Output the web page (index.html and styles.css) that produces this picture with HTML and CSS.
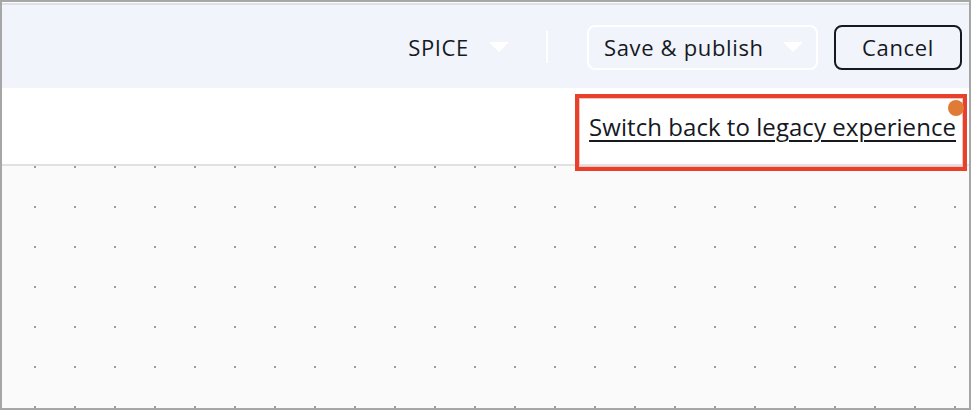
FILE: index.html
```html
<!DOCTYPE html>
<html lang="en">
<head>
<meta charset="utf-8">
<title>Editor</title>
<link rel="stylesheet" href="styles.css">
</head>
<body>
<div class="frame">
  <header class="topbar">
    <div class="source">
      <span class="source-label">SPICE</span>
      <svg class="caret" width="20" height="10" viewBox="0 0 20 10"><path d="M0 0 H20 L10 10 Z" fill="#ffffff"/></svg>
    </div>
    <span class="divider"></span>
    <button class="btn btn-save">
      <span>Save &amp; publish</span>
      <svg class="caret" width="20" height="10" viewBox="0 0 20 10"><path d="M0 0 H20 L10 10 Z" fill="#ffffff"/></svg>
    </button>
    <button class="btn btn-cancel">Cancel</button>
  </header>
  <div class="banner">
    <a class="legacy-link" href="#">Switch back to legacy experience</a>
  </div>
  <div class="canvas"></div>
  <div class="highlight"></div>
  <span class="badge-dot"></span>
</div>
</body>
</html>
```

FILE: styles.css
```css
* { box-sizing: border-box; }
html, body { margin: 0; padding: 0; }
body {
  font-family: "Open Sans", "Noto Sans", Arial, sans-serif;
  color: #16191f;
  background: #ffffff;
}
.frame {
  position: relative;
  width: 971px;
  height: 410px;
  border: 2px solid #a6a6a6;
  display: flex;
  flex-direction: column;
  overflow: hidden;
}
.topbar {
  height: 86px;
  flex: none;
  background: #f1f4fb;
  border-top: 1px solid #ffffff;
  box-shadow: inset 0 2px 0 #dbe1e6;
  display: flex;
  align-items: center;
  justify-content: flex-end;
  padding: 3px 7px 0 0;
}
.source {
  display: flex;
  align-items: center;
  gap: 20px;
  margin-right: 37px;
}
.source-label {
  font-size: 22px;
  letter-spacing: 0.65px;
}
.caret { display: block; flex: none; }
.divider {
  width: 2px;
  height: 32px;
  background: #ffffff;
  margin-right: 39px;
}
.btn {
  font-family: inherit;
  font-size: 22px;
  letter-spacing: 0.65px;
  color: #16191f;
  height: 45px;
  border-radius: 8px;
  display: flex;
  align-items: center;
  white-space: nowrap;
  cursor: pointer;
}
.btn-save {
  background: #f1f4fb;
  border: 2px solid #ffffff;
  padding: 0 13px 0 15px;
  justify-content: space-between;
  width: 231px;
  margin-right: 16px;
}
.btn-cancel {
  background: #f1f4fb;
  border: 2px solid #16191f;
  width: 128px;
  justify-content: center;
  padding: 0;
}
.banner {
  height: 78px;
  flex: none;
  background: #ffffff;
  border-bottom: 2px solid #e1e1e1;
  display: flex;
  align-items: center;
  justify-content: flex-end;
  padding: 0 13px 0 0;
}
.legacy-link {
  font-size: 24px;
  letter-spacing: 0.05px;
  color: #16191f;
  text-decoration: underline;
  text-decoration-thickness: 2px;
  text-underline-offset: 4px;
}
.canvas {
  flex: 1;
  background-color: #fafafa;
  background-image: radial-gradient(circle at 1px 1px, #9e9e9e 1.2px, transparent 1.3px);
  background-size: 40px 40px;
  background-position: 32px 0;
}
.highlight {
  position: absolute;
  left: 573px;
  top: 92px;
  width: 392px;
  height: 77px;
  border: 4px solid #e8402b;
  box-shadow: inset 0 0 0 1px #f3c3bb;
  pointer-events: none;
}
.badge-dot {
  position: absolute;
  left: 946px;
  top: 98px;
  width: 16px;
  height: 16px;
  border-radius: 50%;
  background: #e07b35;
}
```
